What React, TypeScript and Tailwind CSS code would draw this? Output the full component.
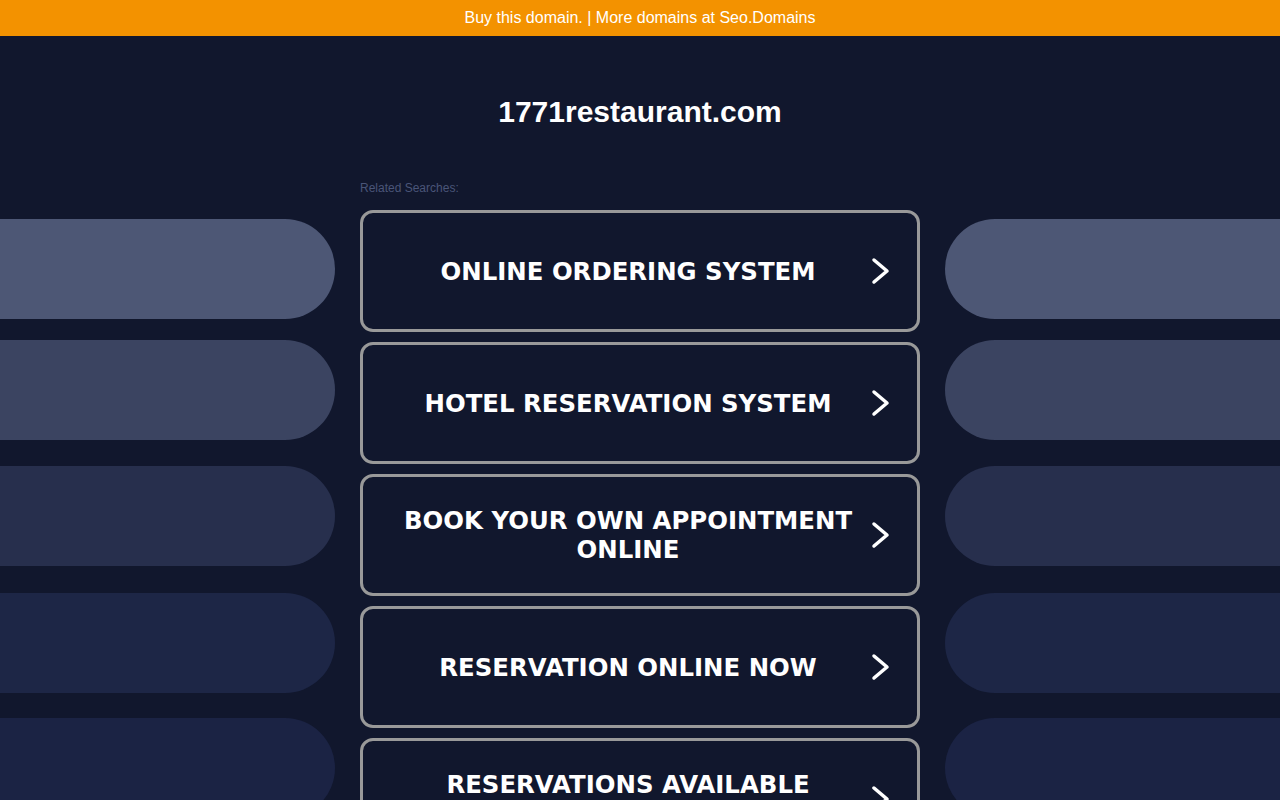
import React from 'react';

const searches = [
  'ONLINE ORDERING SYSTEM',
  'HOTEL RESERVATION SYSTEM',
  'BOOK YOUR OWN APPOINTMENT ONLINE',
  'RESERVATION ONLINE NOW',
  'RESERVATIONS AVAILABLE ONLINE',
];

const pills = [
  { bg: 'bg-[#4d5775]', mt: 'mt-[9px]' },
  { bg: 'bg-[#3b4461]', mt: 'mt-[21px]' },
  { bg: 'bg-[#272f4d]', mt: 'mt-[26px]' },
  { bg: 'bg-[#1d2646]', mt: 'mt-[27px]' },
  { bg: 'bg-[#1b2344]', mt: 'mt-[25px]' },
];

function Chevron() {
  return (
    <svg width="20" height="28" viewBox="0 0 20 28" className="shrink-0">
      <path d="M4 3 L17 14 L4 25" fill="none" stroke="#fff" strokeWidth="3.5" strokeLinecap="round" strokeLinejoin="round" />
    </svg>
  );
}

export default function App() {
  return (
    <div className="h-[800px] overflow-hidden bg-[#11172d] font-['Liberation_Sans',Arial,sans-serif]">
      {/* top banner */}
      <div className="h-9 bg-[#f39200] flex items-center justify-center text-white text-base">
        Buy this domain. | More domains at Seo.Domains
      </div>

      <h1 className="pt-[58px] text-center text-white text-[30px] leading-9 font-bold">1771restaurant.com</h1>

      <div className="flex mt-[50px]">
        <div className="w-[335px] shrink-0" />
        <div className="w-[560px] mx-[25px] shrink-0 text-[12px] leading-4 text-[#4a5578]">Related Searches:</div>
      </div>

      <div className="flex mt-[14px]">
        {/* left pills */}
        <div className="w-[335px] shrink-0 flex flex-col">
          {pills.map((p, i) => (
            <div key={i} className={`${p.mt} h-[100px] ${p.bg} rounded-r-[50px]`} />
          ))}
        </div>

        {/* buttons */}
        <div className="w-[560px] mx-[25px] shrink-0 flex flex-col gap-[10px]">
          {searches.map((s) => (
            <a
              key={s}
              href="#"
              className="h-[122px] border-[3px] border-[#999] rounded-[13px] flex items-center pl-[35px] pr-[27px] gap-[12px]"
            >
              <span className="flex-1 text-center text-white font-bold text-[24.4px] leading-[29px] font-['DejaVu_Sans',Verdana,sans-serif]">
                {s}
              </span>
              <Chevron />
            </a>
          ))}
        </div>

        {/* right pills */}
        <div className="flex-1 flex flex-col">
          {pills.map((p, i) => (
            <div key={i} className={`${p.mt} h-[100px] ${p.bg} rounded-l-[50px]`} />
          ))}
        </div>
      </div>
    </div>
  );
}
